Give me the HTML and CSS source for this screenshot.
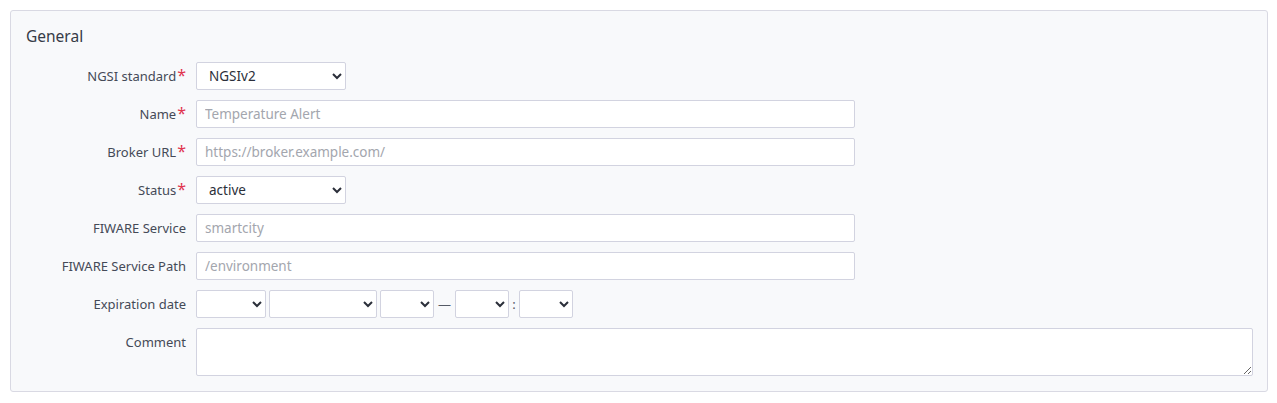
FILE: index.html
```html
<!DOCTYPE html>
<html>
<head>
<meta charset="utf-8">
<link rel="stylesheet" href="styles.css">
</head>
<body>
<div class="panel">
  <div class="title">General</div>
  <div class="form">
    <label class="lbl">NGSI standard<span class="req">*</span></label>
    <div class="ctl"><select class="sel w150"><option>NGSIv2</option></select></div>

    <label class="lbl">Name<span class="req">*</span></label>
    <div class="ctl"><input class="inp" placeholder="Temperature Alert"></div>

    <label class="lbl">Broker URL<span class="req">*</span></label>
    <div class="ctl"><input class="inp" placeholder="https://broker.example.com/"></div>

    <label class="lbl">Status<span class="req">*</span></label>
    <div class="ctl"><select class="sel w150"><option>active</option></select></div>

    <label class="lbl">FIWARE Service</label>
    <div class="ctl"><input class="inp" placeholder="smartcity"></div>

    <label class="lbl">FIWARE Service Path</label>
    <div class="ctl"><input class="inp" placeholder="/environment"></div>

    <label class="lbl">Expiration date</label>
    <div class="ctl date">
      <select class="sel w70"><option></option></select>
      <select class="sel w108"><option></option></select>
      <select class="sel w54"><option></option></select>
      <span class="sep dash">—</span>
      <select class="sel w54"><option></option></select>
      <span class="sep colon">:</span>
      <select class="sel w54"><option></option></select>
    </div>

    <label class="lbl top">Comment</label>
    <div class="ctl"><textarea class="ta"></textarea></div>
  </div>
</div>
</body>
</html>
```

FILE: styles.css
```css
html, body {
  margin: 0;
  padding: 0;
  background: #ffffff;
}
body {
  padding: 10px 9px 10px 10px;
  font-family: "Noto Sans", "Open Sans", sans-serif;
  color: #3b4050;
}
.panel {
  border: 1px solid #d9d9e3;
  border-radius: 3px;
  background: #f8f9fb;
  padding: 14px 15px 15px 15px;
  height: 351px;
}
.title {
  font-size: 15.5px;
  font-weight: 400;
  color: #363b47;
  line-height: 22px;
  margin-bottom: 15px;
}
.form {
  display: grid;
  grid-template-columns: 160px 1fr;
  column-gap: 10px;
  row-gap: 10px;
}
.lbl {
  font-size: 13px;
  color: #454a57;
  text-align: right;
  line-height: 28px;
  white-space: nowrap;
}
.lbl.top {
  line-height: 18px;
  padding-top: 5px;
}
.req {
  color: #e0344f;
  font-size: 16px;
  line-height: 10px;
  margin-left: 1px;
}
.ctl {
  display: flex;
  align-items: center;
}
.sel, .inp, .ta {
  box-sizing: border-box;
  height: 28px;
  border: 1px solid #d2d3e0;
  border-radius: 2px;
  background: #ffffff;
  font-family: "Noto Sans", "Open Sans", sans-serif;
  font-size: 13.5px;
  color: #2b2f3a;
  margin: 0;
}
.sel {
  padding: 0 6px 0 8px;
}
.w150 { width: 150px; }
.w70 { width: 70px; }
.w108 { width: 108px; }
.w54 { width: 54px; }
.inp {
  width: 659px;
  padding: 0 8px;
}
.inp::placeholder {
  color: #a3a6ae;
}
.date {
  gap: 3px;
}
.sep {
  font-size: 13px;
  color: #555a66;
  text-align: center;
}
.dash { width: 15px; }
.colon { width: 4px; }
.ta {
  width: 1057px;
  height: 48px;
  resize: vertical;
  display: block;
}
```
